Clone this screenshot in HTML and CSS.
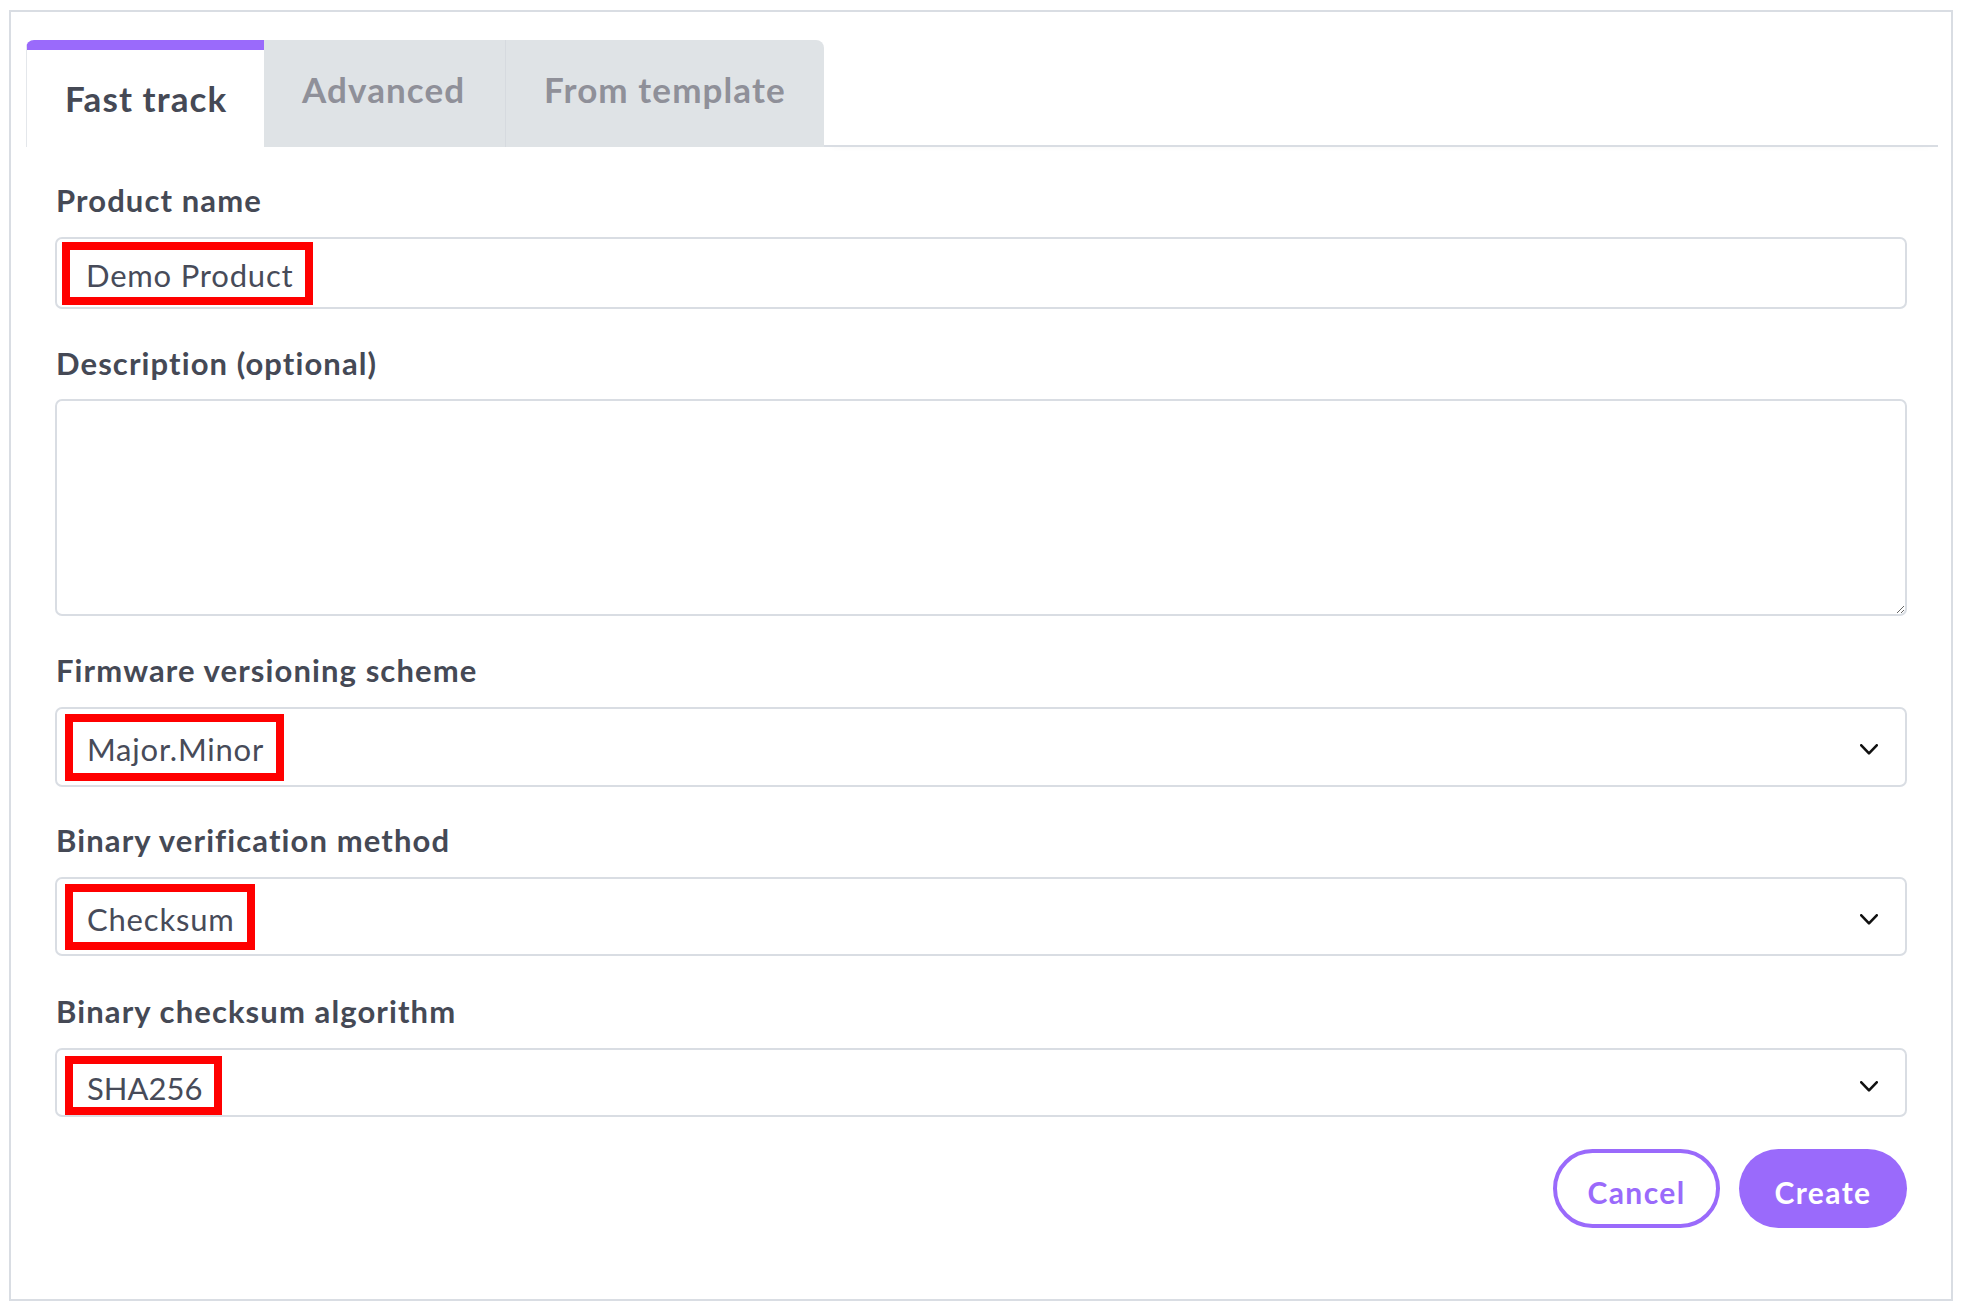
FILE: index.html
```html
<!DOCTYPE html>
<html lang="en">
<head>
<meta charset="utf-8">
<title>New product</title>
<link rel="stylesheet" href="styles.css">
</head>
<body>
<div class="frame">
  <div class="tabs">
    <div class="tab tab--active">Fast track</div>
    <div class="tab tab--mid">Advanced</div>
    <div class="tab tab--last">From template</div>
    <div class="tabs__rest"></div>
  </div>
  <form class="form">
    <div class="group">
      <label class="label">Product name</label>
      <div class="field field--input"><span class="mark mark--input">Demo Product</span></div>
    </div>
    <div class="group group--area">
      <label class="label">Description (optional)</label>
      <textarea class="textarea"></textarea>
    </div>
    <div class="group">
      <label class="label">Firmware versioning scheme</label>
      <div class="field field--select field--tall"><span class="mark">Major.Minor</span><svg class="chev" viewBox="0 0 18 11" width="18" height="11"><polyline points="1.3,1.3 9,9.3 16.7,1.3"/></svg></div>
    </div>
    <div class="group">
      <label class="label">Binary verification method</label>
      <div class="field field--select field--tall2"><span class="mark">Checksum</span><svg class="chev" viewBox="0 0 18 11" width="18" height="11"><polyline points="1.3,1.3 9,9.3 16.7,1.3"/></svg></div>
    </div>
    <div class="group group--last">
      <label class="label">Binary checksum algorithm</label>
      <div class="field field--select field--short"><span class="mark mark--digits">SHA256</span><svg class="chev" viewBox="0 0 18 11" width="18" height="11"><polyline points="1.3,1.3 9,9.3 16.7,1.3"/></svg></div>
    </div>
    <div class="actions">
      <button type="button" class="btn btn--outline">Cancel</button>
      <button type="button" class="btn btn--solid">Create</button>
    </div>
  </form>
</div>
</body>
</html>
```

FILE: styles.css
```css
* { box-sizing: border-box; }
html, body { margin: 0; background: #ffffff; }
body {
  font-family: Lato, "Noto Sans", sans-serif;
  color: #454955;
}
.frame {
  margin: 10px 11px 0 9px;
  height: 1291px;
  border: 2px solid #d9dde3;
  padding: 28px 13px 0 15px;
}
.tabs {
  display: flex;
  height: 107px;
}
.tab {
  padding: 29px 0 0 38px;
  font-size: 35px;
  font-weight: 700;
  letter-spacing: 1.1px;
  line-height: 41px;
  color: #8f9099;
  background: #dfe3e6;
  white-space: nowrap;
}
.tab--active {
  width: 238px;
  background: #ffffff;
  color: #454955;
  border-top: 10px solid #9a6afb;
  border-left: 1px solid #e4e7eb;
  border-top-left-radius: 8px;
  padding-top: 28px;
}
.tab--mid { width: 241px; }
.tab--last {
  width: 319px;
  border-left: 1px solid #d6dadf;
  border-top-right-radius: 8px;
}
.tabs__rest {
  flex: 1;
  border-bottom: 2px solid #d9dde3;
  box-shadow: 0 6px 8px -8px rgba(0, 0, 0, 0.06);
}
.form {
  display: flex;
  flex-direction: column;
  gap: 35px;
  padding: 35px 31px 0 29px;
}
.group {
  display: flex;
  flex-direction: column;
}
.group--area { margin-bottom: 1px; }
.group--last { margin-top: 2px; }
.label {
  font-size: 31px;
  font-weight: 700;
  letter-spacing: 1.1px;
  line-height: 36px;
  margin-bottom: 19px;
  padding-left: 1px;
  color: #454955;
}
.group--area .label { margin-top: 1px; margin-bottom: 18px; }
.field {
  display: flex;
  align-items: center;
  border: 2px solid #d9dde3;
  border-radius: 7px;
  background: #ffffff;
  padding-left: 8px;
  padding-right: 27px;
}
.field--input { height: 72px; padding-left: 5px; }
.field--tall { height: 80px; }
.field--tall2 { height: 79px; }
.field--short { height: 69px; }
.mark {
  display: inline-flex;
  align-items: center;
  height: 67px;
  border: 8px solid #ff0000;
  padding: 4px 12px 0 14px;
  font-size: 31px;
  letter-spacing: 0.8px;
  color: #474b59;
  white-space: nowrap;
}
.mark--input { height: 63px; padding: 4px 12px 0 16px; }
.mark--digits { letter-spacing: 0; }
.field--tall2 .mark { height: 66px; }
.field--short .mark { height: 59px; margin-top: 6px; }
.chev {
  margin-left: auto;
  margin-top: 5px;
  fill: none;
  stroke: #111111;
  stroke-width: 2.6;
  stroke-linecap: round;
  stroke-linejoin: round;
}
.field--short .chev { margin-top: 8px; }
.textarea {
  display: block;
  height: 217px;
  width: 100%;
  border: 2px solid #d9dde3;
  border-radius: 7px;
  resize: vertical;
  font-family: inherit;
  margin: 0;
}
.actions {
  display: flex;
  justify-content: flex-end;
  gap: 19px;
  margin-top: -3px;
}
.btn {
  height: 79px;
  width: 168px;
  border-radius: 40px;
  font-family: Lato, "Noto Sans", sans-serif;
  font-size: 30px;
  font-weight: 700;
  letter-spacing: 1.4px;
  padding: 6px 0 0;
  cursor: pointer;
}
.btn--outline {
  background: #ffffff;
  color: #9a6afb;
  border: 4px solid #9a6afb;
  width: 167px;
}
.btn--solid {
  background: #9a6afb;
  color: #ffffff;
  border: 0;
}
```
